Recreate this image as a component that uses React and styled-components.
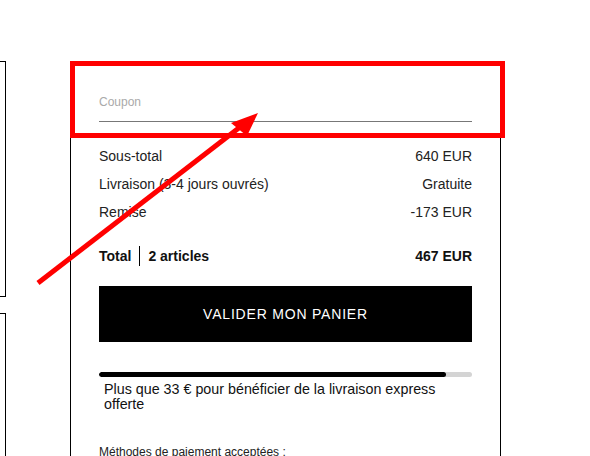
import React from "react";
import styled, { createGlobalStyle } from "styled-components";

const GlobalStyle = createGlobalStyle`
  html, body {
    margin: 0;
    padding: 0;
    background: #fff;
    overflow: hidden;
  }
  body {
    font-family: "Liberation Sans", Arial, sans-serif;
    color: #222;
  }
`;

const Page = styled.div`
  position: relative;
  display: flex;
  align-items: flex-start;
  width: 590px;
  height: 456px;
  padding-top: 61px;
  box-sizing: border-box;
  overflow: hidden;
`;

const ProductColumn = styled.div`
  display: flex;
  flex-direction: column;
  gap: 16px;
  width: 306px;
  margin-left: -300px;
  flex-shrink: 0;
`;

const ProductCard = styled.div`
  height: ${(p) => p.$height}px;
  border: 1px solid #000;
  box-sizing: border-box;
`;

const SummaryPanel = styled.div`
  width: 431px;
  min-height: 500px;
  margin-left: 64px;
  padding: 0 28px;
  border: 1px solid #000;
  box-sizing: border-box;
  flex-shrink: 0;
`;

const CouponField = styled.label`
  display: block;
  padding-top: 32px;
  border-bottom: 1px solid #777;
  padding-bottom: 11px;
`;

const CouponLabel = styled.span`
  display: block;
  font-size: 12px;
  line-height: 16px;
  color: #aaa;
`;

const Rows = styled.div`
  margin-top: 20px;
`;

const Row = styled.div`
  display: flex;
  justify-content: space-between;
  align-items: center;
  font-size: 14px;
  line-height: 28px;
  color: #222;
`;

const TotalRow = styled(Row)`
  margin-top: 16px;
  font-weight: bold;
  color: #111;
`;

const TotalLabel = styled.div`
  display: flex;
  align-items: center;
`;

const Divider = styled.span`
  display: inline-block;
  width: 1px;
  height: 20px;
  background: #000;
  margin: 0 8px;
`;

const CheckoutButton = styled.button`
  display: block;
  width: 100%;
  height: 56px;
  margin-top: 16px;
  border: none;
  background: #000;
  color: #fff;
  font-family: "Liberation Sans", Arial, sans-serif;
  font-size: 14px;
  letter-spacing: 0.8px;
  cursor: pointer;
`;

const ProgressTrack = styled.div`
  margin-top: 30px;
  height: 5px;
  border-radius: 3px;
  background: #d4d4d4;
  overflow: hidden;
`;

const ProgressFill = styled.div`
  height: 100%;
  background: #000;
  border-radius: 3px;
`;

const ProgressText = styled.p`
  max-width: 350px;
  margin: 5px 0 0;
  padding-left: 5px;
  font-size: 14.3px;
  line-height: 15px;
  color: #111;
`;

const PaymentTitle = styled.p`
  margin: 33px 0 0;
  font-size: 12px;
  line-height: 14px;
  color: #222;
`;

const Highlight = styled.div`
  position: absolute;
  left: 70px;
  top: 61px;
  width: 435px;
  height: 77px;
  border: 5px solid #ff0000;
  box-sizing: border-box;
  pointer-events: none;
`;

const ArrowLayer = styled.svg`
  position: absolute;
  left: 0;
  top: 0;
  pointer-events: none;
`;

export default function App() {
  const progress = 93;
  return (
    <>
      <GlobalStyle />
      <Page>
        <ProductColumn>
          <ProductCard $height={236} />
          <ProductCard $height={400} />
        </ProductColumn>
        <SummaryPanel>
          <CouponField>
            <CouponLabel>Coupon</CouponLabel>
          </CouponField>
          <Rows>
            <Row>
              <span>Sous-total</span>
              <span>640 EUR</span>
            </Row>
            <Row>
              <span>Livraison (3-4 jours ouvrés)</span>
              <span>Gratuite</span>
            </Row>
            <Row>
              <span>Remise</span>
              <span>-173 EUR</span>
            </Row>
            <TotalRow>
              <TotalLabel>
                <span>Total</span>
                <Divider />
                <span>2 articles</span>
              </TotalLabel>
              <span>467 EUR</span>
            </TotalRow>
          </Rows>
          <CheckoutButton>VALIDER MON PANIER</CheckoutButton>
          <ProgressTrack>
            <ProgressFill style={{ width: `${progress}%` }} />
          </ProgressTrack>
          <ProgressText>
            Plus que 33 € pour bénéficier de la livraison express offerte
          </ProgressText>
          <PaymentTitle>Méthodes de paiement acceptées :</PaymentTitle>
        </SummaryPanel>
        <Highlight />
        <ArrowLayer width="590" height="456" viewBox="0 0 590 456">
          <line x1="38" y1="283" x2="244" y2="124" stroke="#ff0000" strokeWidth="5" />
          <polygon points="258,113 231,123 247,136" fill="#ff0000" />
        </ArrowLayer>
      </Page>
    </>
  );
}
